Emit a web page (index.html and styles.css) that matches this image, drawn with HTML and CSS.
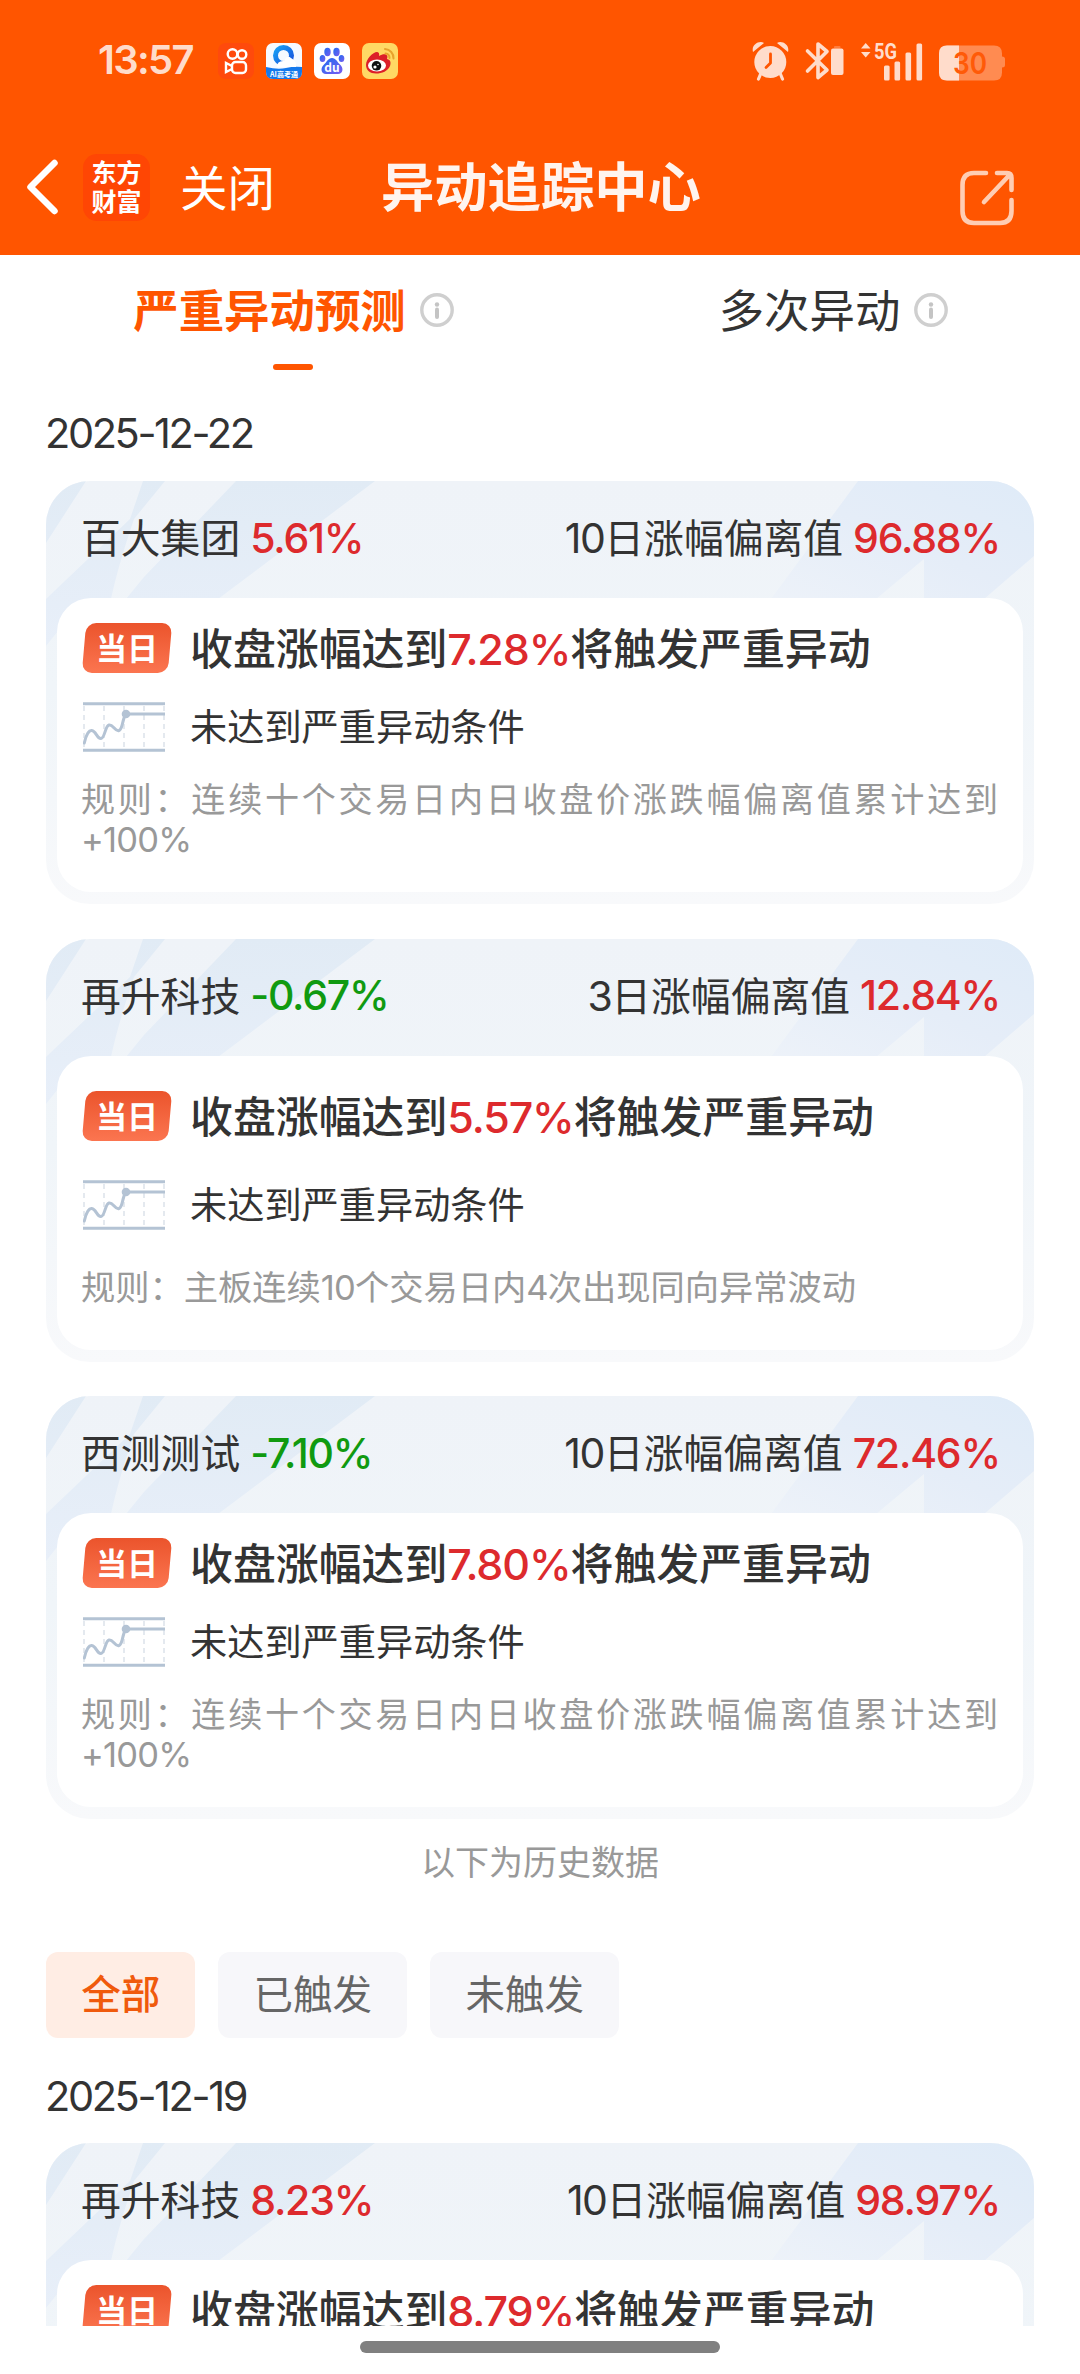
FILE: index.html
```html
<!DOCTYPE html>
<html lang="zh-CN">
<head>
<meta charset="utf-8">
<title>异动追踪中心</title>
<link rel="stylesheet" href="styles.css">
</head>
<body>
<svg class="defs" width="0" height="0">
  <defs>
    <linearGradient id="sheen" x1="0" y1="0" x2="0" y2="1">
      <stop offset="0" stop-color="#e1ebf5"/><stop offset="1" stop-color="#e8eff9"/>
    </linearGradient>
    <linearGradient id="sheenRight" x1="0" y1="1" x2="1" y2="0">
      <stop offset="0" stop-color="#edf2f9"/><stop offset=".5" stop-color="#e5edf8"/><stop offset="1" stop-color="#dfebf8"/>
    </linearGradient>
    <linearGradient id="paw" x1="0" y1="0" x2="1" y2="1">
      <stop offset="0" stop-color="#1f6cf0"/><stop offset="1" stop-color="#7a5cf0"/>
    </linearGradient>
    <linearGradient id="ring" x1="0" y1="0" x2="1" y2="1">
      <stop offset="0" stop-color="#18a0f5"/><stop offset="1" stop-color="#1a52dc"/>
    </linearGradient>
    <symbol id="streaks" viewBox="0 0 988 200">
      <path fill="url(#sheen)" d="M0 0H40L0 62ZM97 0H119L88 38Q72 85 65 118L20 140L0 165V118L84 38ZM190 0H329L172 118H80L98 96Z"/>
      <path fill="url(#sheenRight)" d="M812 0H988V75L938 118H878V78L830 118H725Z"/>
    </symbol>
    <symbol id="info" viewBox="0 0 34 34">
      <circle cx="17" cy="17" r="15.200" fill="none" stroke="#cfcfcf" stroke-width="3.400"/>
      <circle cx="17" cy="11.500" r="2.200" fill="#c4c4c4"/>
      <path d="M17 16.500V24" stroke="#c4c4c4" stroke-width="4" stroke-linecap="round"/>
    </symbol>
    <symbol id="trend" viewBox="0 0 82 50">
      <path d="M1 4V46M21 4V46M41 4V46M61 4V46M81 4V46" stroke="#d9e0e8" stroke-width="1.400" stroke-dasharray="5 4" fill="none"/>
      <path d="M0 1.700H82M0 48.300H82M43 12H82" stroke="#b4c3d4" stroke-width="3" fill="none"/>
      <path d="M1.300 41C3 33 6 28 9 28.500C13 29 14 37 18 36.500C22 36 22 24 26 23C30 22 32 30 36 28.500C40 27 39 18 42.500 12.500" stroke="#b4c3d4" stroke-width="3" fill="none" stroke-linecap="round"/>
      <circle cx="43" cy="12" r="4.300" fill="#b4c3d4"/>
    </symbol>
  </defs>
</svg>

<div class="screen">
  <header class="top">
    <div class="status">
      <span class="clock">13:57</span>
      <div class="apps">
        <svg class="app" viewBox="0 0 36 36"><rect width="36" height="36" rx="8" fill="#ff4a0c"/><g fill="none" stroke="#fff" stroke-width="2.400"><circle cx="14.500" cy="11" r="4.800"/><circle cx="24" cy="11.500" r="4.300"/><rect x="14" y="19" width="14" height="11" rx="3.500"/><path d="M14 23L8 20V29L14 26"/></g></svg>
        <svg class="app" viewBox="0 0 36 36"><rect width="36" height="36" rx="7" fill="#f6faff"/><path d="M0 24Q12 27 20 25T36 24V29Q36 36 29 36H7Q0 36 0 29Z" fill="#1479ec"/><circle cx="17.500" cy="12.500" r="8" fill="none" stroke="url(#ring)" stroke-width="5"/><path d="M11 24Q11 17.500 18 18Q21 11.500 25 15Q31 18 30 24Z" fill="#fff"/><text x="18" y="33.500" font-size="7" font-weight="700" text-anchor="middle" fill="#fff">AI高考通</text></svg>
        <svg class="app" viewBox="0 0 36 36"><rect width="36" height="36" rx="7" fill="#fff"/><g fill="url(#paw)"><ellipse cx="13.500" cy="9" rx="3.200" ry="4.200"/><ellipse cx="22.500" cy="9" rx="3.200" ry="4.200"/><ellipse cx="8.500" cy="15.500" rx="2.800" ry="3.600"/><ellipse cx="27.500" cy="15.500" rx="2.800" ry="3.600"/><path d="M18 15C22 15 23 19 26 21.500C30 25 29 31 24 31H12C7 31 6 25 10 21.500C13 19 14 15 18 15Z"/></g><text x="18" y="28.500" font-size="12" font-weight="700" text-anchor="middle" fill="#fff">du</text></svg>
        <svg class="app" viewBox="0 0 36 36"><rect width="36" height="36" rx="7" fill="#ffd964"/><path d="M4 22C4 16 11 9 15 9C18 9 17 13 17 13C22 10 27 11 25 16C29 17 29 20 28 23C26 28 20 30.500 14 30.500C8 30.500 4 27 4 22Z" fill="#dc1f28"/><ellipse cx="15" cy="22.500" rx="9" ry="6" fill="#fff"/><circle cx="14.500" cy="22.800" r="4.800" fill="#111"/><circle cx="13" cy="24" r="1.600" fill="#fff"/><circle cx="16" cy="21.500" r=".8" fill="#fff"/><path d="M23 6A9 9 0 0 1 31.500 15.500M23.500 10.500A4.500 4.500 0 0 1 27.500 15" fill="none" stroke="#e8a22c" stroke-width="2" stroke-linecap="round"/></svg>
      </div>
      <svg class="tray" width="254" height="40" viewBox="0 0 254 40">
        <g fill="#ffdccb">
          <circle cx="18.300" cy="21" r="16"/>
          <path d="M1 11C-1 4 7-1 12 2ZM36 11C38 4 30-1 25 2Z"/>
          <path d="M9 32L6.500 38M28 32L30.500 38" stroke="#ffdccb" stroke-width="3.200" stroke-linecap="round"/>
          <path d="M18.500 13V22L14 26.500" stroke="#ff5500" stroke-width="2.800" fill="none" stroke-linecap="round" stroke-linejoin="round"/>
          <path d="M55.500 10L75 29L66 36.500V3L75 10.500L55.500 30" fill="none" stroke="#ffdccb" stroke-width="3.600" stroke-linejoin="round" stroke-linecap="round"/>
          <rect x="79" y="7.500" width="12.500" height="26.500" rx="2"/><rect x="82" y="5" width="6.500" height="2.500" rx="1" opacity=".3"/>
          <path d="M109 7.500L113.700 2L118.500 7.500ZM109 11L113.700 16.500L118.500 11Z"/>
          <rect x="132" y="24.500" width="5.600" height="15" rx="1.500"/><rect x="142.500" y="20.500" width="5.600" height="19" rx="1.500"/><rect x="153.500" y="11.500" width="5.600" height="28" rx="1.500"/><rect x="164.500" y="2.500" width="5.600" height="37" rx="1.500"/>
          <text x="122" y="17.500" font-family="Roboto" font-size="22" font-weight="700" textLength="23" lengthAdjust="spacingAndGlyphs">5G</text>
          <path d="M195 4.500H242Q250 4.500 250 12.500V15.500Q253 15.500 253 18V24Q253 26.500 250 26.500V31.500Q250 39.500 242 39.500H195Q187 39.500 187 31.500V12.500Q187 4.500 195 4.500Z" opacity=".4"/>
          <path d="M195 4.500H207V39.500H195Q187 39.500 187 31.500V12.500Q187 4.500 195 4.500Z"/>
        </g>
        <text x="201" y="32.500" font-family="Inter" font-size="30" font-weight="600" fill="#ff5a08" textLength="34" lengthAdjust="spacingAndGlyphs">30</text>
      </svg>
    </div>
    <nav class="nav">
      <svg class="back" width="34" height="58" viewBox="0 0 34 58"><path d="M28.500 5L4.500 29L28.500 53" fill="none" stroke="#fff" stroke-width="6.500" stroke-linecap="round" stroke-linejoin="round"/></svg>
      <div class="logo"><span>东方</span><span>财富</span></div>
      <span class="close">关闭</span>
      <h1 class="title">异动追踪中心</h1>
      <svg class="share" width="54" height="56" viewBox="0 0 54 56"><path d="M26 3H14Q2.500 3 2.500 15V41Q2.500 53 14 53H40Q51.500 53 51.500 41V30M37 3H47Q51.500 3 51.500 8V20M50 4.500L24 32" fill="none" stroke="#ffcdb3" stroke-width="4.600" stroke-linecap="round"/></svg>
    </nav>
  </header>

  <main class="content">
    <div class="tabs">
      <div class="tab tab-on"><span>严重异动预测</span><svg class="info"><use href="#info"/></svg></div>
      <div class="tab"><span>多次异动</span><svg class="info"><use href="#info"/></svg></div>
    </div>

    <h2 class="date">2025-12-22</h2>
    <div class="cards">
      <section class="card">
        <svg class="streaks"><use href="#streaks"/></svg>
        <div class="head"><span class="name">百大集团</span><b class="num up">5.61%</b><span class="dev"><i class="dig">10</i>日涨幅偏离值</span><b class="num up">96.88%</b></div>
        <div class="body">
          <div class="row"><span class="badge"><span>当日</span></span><p class="goal">收盘涨幅达到<b class="up">7.28%</b>将触发严重异动</p></div>
          <div class="row"><svg class="trend"><use href="#trend"/></svg><p class="state">未达到严重异动条件</p></div>
          <p class="rule">规则：连续十个交易日内日收盘价涨跌幅偏离值累计达到<wbr><i class="dig">+100%</i></p>
        </div>
      </section>
      <section class="card">
        <svg class="streaks"><use href="#streaks"/></svg>
        <div class="head"><span class="name">再升科技</span><b class="num down">-0.67%</b><span class="dev"><i class="dig">3</i>日涨幅偏离值</span><b class="num up">12.84%</b></div>
        <div class="body body-loose">
          <div class="row"><span class="badge"><span>当日</span></span><p class="goal">收盘涨幅达到<b class="up">5.57%</b>将触发严重异动</p></div>
          <div class="row"><svg class="trend"><use href="#trend"/></svg><p class="state">未达到严重异动条件</p></div>
          <p class="rule">规则：主板连续<i class="dig">10</i>个交易日内<i class="dig">4</i>次出现同向异常波动</p>
        </div>
      </section>
      <section class="card">
        <svg class="streaks"><use href="#streaks"/></svg>
        <div class="head"><span class="name">西测测试</span><b class="num down">-7.10%</b><span class="dev"><i class="dig">10</i>日涨幅偏离值</span><b class="num up">72.46%</b></div>
        <div class="body">
          <div class="row"><span class="badge"><span>当日</span></span><p class="goal">收盘涨幅达到<b class="up">7.80%</b>将触发严重异动</p></div>
          <div class="row"><svg class="trend"><use href="#trend"/></svg><p class="state">未达到严重异动条件</p></div>
          <p class="rule">规则：连续十个交易日内日收盘价涨跌幅偏离值累计达到<wbr><i class="dig">+100%</i></p>
        </div>
      </section>
    </div>

    <p class="divider">以下为历史数据</p>
    <div class="chips">
      <button class="chip chip-on">全部</button>
      <button class="chip">已触发</button>
      <button class="chip">未触发</button>
    </div>

    <h2 class="date date-past">2025-12-19</h2>
    <div class="cards">
      <section class="card">
        <svg class="streaks"><use href="#streaks"/></svg>
        <div class="head"><span class="name">再升科技</span><b class="num up">8.23%</b><span class="dev"><i class="dig">10</i>日涨幅偏离值</span><b class="num up">98.97%</b></div>
        <div class="body">
          <div class="row"><span class="badge"><span>当日</span></span><p class="goal">收盘涨幅达到<b class="up">8.79%</b>将触发严重异动</p></div>
        </div>
      </section>
    </div>
  </main>
  <footer class="home"><div class="home-bar"></div></footer>
</div>
</body>
</html>
```
FILE: styles.css
```css
* { box-sizing: border-box; margin: 0; padding: 0; }
body {
  width: 1080px;
  background: #fff;
  color: #333;
  font-family: "Noto Sans CJK SC", sans-serif;
}
i, b { font-style: normal; }
svg { display: block; flex: none; }
.defs { position: absolute; }
.screen { display: flex; flex-direction: column; height: 2374px; overflow: hidden; }

.top { flex: none; height: 255px; background: #ff5500; }
.status { display: flex; align-items: flex-start; height: 122px; padding: 41px 74px 0 98px; }
.clock {
  width: 120px; height: 38px;
  font: 600 40px/38px Inter, sans-serif;
  letter-spacing: -1.700px;
  color: #ffdccb;
}
.apps { display: flex; gap: 12px; padding-top: 2px; }
.app { width: 36px; height: 36px; }
.tray { margin-left: auto; }
.nav { display: flex; align-items: center; height: 133px; padding: 0 66px 0 26px; }
.back { margin-right: 23px; margin-bottom: 3px; }
.logo {
  display: flex; flex-direction: column; align-items: center; justify-content: center;
  width: 67px; height: 67px; margin-bottom: 3px; padding-bottom: 3px; border-radius: 14px;
  background: #ff4604; color: #fff;
  font-size: 25px; line-height: 29px; font-weight: 700;
}
.close { margin: 0 0 5px 30px; font-size: 47.500px; line-height: 60px; color: #fff; }
.title {
  margin: 0 0 10px 106px;
  font-size: 53.300px; line-height: 60px; font-weight: 700; color: #fff4ee;
}
.share { margin-left: auto; margin-top: 19px; }

.content { flex: none; height: 2071px; overflow: hidden; padding: 0 46px; }
.tabs { display: flex; height: 127px; margin: 0 -46px; }
.tab {
  position: relative;
  display: flex; gap: 14px; justify-content: center; align-items: center;
  width: 587px; height: 109px;
  font-size: 45.400px; line-height: 60px;
}
.tab span { margin-bottom: 3px; }
.tab:last-child { width: 493px; }
.tab-on { font-weight: 700; color: #ff5500; }
.tab-on::after {
  content: ""; position: absolute; left: 273px; top: 109px;
  width: 40px; height: 6px; border-radius: 3px; background: #ff5500;
}
.info { width: 34px; height: 34px; }

.date { height: 99px; margin-left: -1px; padding-top: 21px; font: 400 41.500px/60px Inter, sans-serif; letter-spacing: -2.400px; }
.cards { display: flex; flex-direction: column; gap: 34.500px; }
.card {
  position: relative;
  display: flex; flex-direction: column;
  height: 423px; padding: 0 11px 12px;
  border-radius: 44px;
  overflow: hidden;
  background: linear-gradient(#eff3f8, #f0f5f9 50%, #f8f9fb);
}
.streaks { position: absolute; left: 0; top: 0; width: 988px; height: 200px; }
.head {
  position: relative;
  display: flex; align-items: center;
  height: 117px; padding: 0 23px 4px 25px;
  font-size: 39.800px; line-height: 60px;
}
.name { margin-left: -1px; padding-bottom: 3px; }
.dig { font-family: Inter, sans-serif; }
.head .dig { font-size: 41px; letter-spacing: -1.500px; }
.num { margin-left: 10px; font: 500 41px/60px Inter, sans-serif; letter-spacing: -1.200px; }
.dev { margin-left: auto; padding-bottom: 1px; }
.up { color: #dd2a2d; }
.down { color: #109a10; }
.body {
  position: relative; flex: 1;
  display: flex; flex-direction: column;
  padding: 18px 25px 0;
  border-radius: 34px;
  background: #fff;
}
.row { display: flex; align-items: center; height: 64px; }
.row + .row { height: 50px; margin-top: 22px; }
.badge {
  display: flex; align-items: center; justify-content: center;
  width: 86px; height: 50px; margin: 0 20px 0 2px;
  border-radius: 10px;
  background: linear-gradient(#eb542c, #fb7550);
  color: #fff; transform: skewX(-5deg);
}
.badge span { font-size: 31px; line-height: 46px; padding-bottom: 2px; font-weight: 700; transform: skewX(5deg); }
.goal { padding-bottom: 4px; font-size: 42.900px; line-height: 60px; font-weight: 500; white-space: nowrap; }
.goal b { font: 500 43px/1 Inter, sans-serif; letter-spacing: -1.100px; }
.trend { width: 82px; height: 50px; margin: 0 25px 0 1px; }
.state { padding-bottom: 3px; font-size: 37.200px; line-height: 47px; }
.rule { margin: 26px 0 0 -1px; font-size: 34.100px; line-height: 39.500px; color: #999; text-align: justify; }
.rule .dig { font-size: 34.500px; line-height: 1; letter-spacing: -.8px; }
.body-loose { padding-top: 28px; }
.body-loose .row + .row { margin-top: 32px; }
.body-loose .rule { margin-top: 36px; font-size: 34.250px; }

.divider { height: 133px; padding-top: 17px; font-size: 34px; line-height: 50px; text-align: center; color: #999; }
.chips { display: flex; gap: 23px; }
.chip {
  height: 86px; padding: 0 35.200px 7px; border: 0; border-radius: 12px;
  background: #f7f7fa; color: #666;
  font: 400 39.500px/60px "Noto Sans CJK SC", sans-serif;
}
.chip-on { background: #ffede4; color: #f05a0c; font-weight: 500; }
.date-past { height: 105px; padding-top: 28px; }

.home { flex: 1; display: flex; justify-content: center; padding-top: 15px; }
.home-bar { width: 360px; height: 12px; border-radius: 6px; background: #808080; }
```
